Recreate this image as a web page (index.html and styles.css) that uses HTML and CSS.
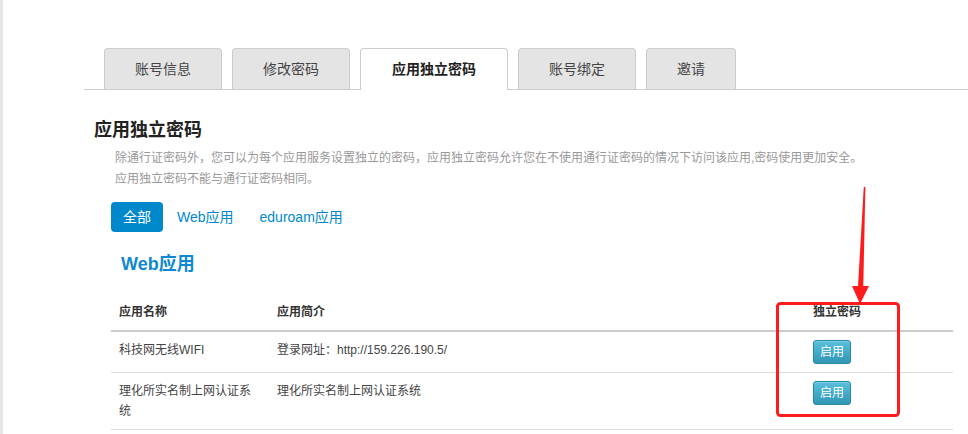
FILE: index.html
```html
<!DOCTYPE html>
<html lang="zh-CN">
<head>
<meta charset="utf-8">
<title>应用独立密码</title>
<link rel="stylesheet" href="styles.css">
</head>
<body>
<div class="page">
  <div class="content">
    <ul class="tabs">
      <li class="tab">账号信息</li>
      <li class="tab">修改密码</li>
      <li class="tab active">应用独立密码</li>
      <li class="tab">账号绑定</li>
      <li class="tab">邀请</li>
    </ul>
    <div class="section">
      <h2 class="title">应用独立密码</h2>
      <p class="desc">除通行证密码外，您可以为每个应用服务设置独立的密码，应用独立密码允许您在不使用通行证密码的情况下访问该应用,密码使用更加安全。<br>应用独立密码不能与通行证密码相同。</p>
      <ul class="pills">
        <li class="pill on">全部</li>
        <li class="pill">Web应用</li>
        <li class="pill">eduroam应用</li>
      </ul>
      <h3 class="group">Web应用</h3>
      <table class="apps">
        <colgroup>
          <col class="c1"><col class="c2"><col class="c3">
        </colgroup>
        <thead>
          <tr><th>应用名称</th><th>应用简介</th><th>独立密码</th></tr>
        </thead>
        <tbody>
          <tr>
            <td>科技网无线WIFI</td>
            <td>登录网址：http://159.226.190.5/</td>
            <td><button class="btn">启用</button></td>
          </tr>
          <tr>
            <td>理化所实名制上网认证系统</td>
            <td>理化所实名制上网认证系统</td>
            <td><button class="btn">启用</button></td>
          </tr>
        </tbody>
      </table>
    </div>
  </div>
  <svg class="annot" width="968" height="434" viewBox="0 0 968 434" aria-hidden="true">
    <rect x="777.5" y="303.5" width="121" height="112" rx="3" fill="none" stroke="#fe1b1b" stroke-width="3"/>
    <polygon points="863.8,187 865.4,187 863.2,290 857.8,290" fill="#fe1b1b"/>
    <polygon points="852,286 869,286 860,304" fill="#fe1b1b"/>
  </svg>
</div>
</body>
</html>
```

FILE: styles.css
```css
html, body {
  margin: 0;
  padding: 0;
  background: #fff;
}
body {
  font-family: "Liberation Sans", "Noto Sans CJK SC", sans-serif;
  font-size: 12px;
  color: #333;
}
.page {
  position: relative;
  width: 968px;
  height: 434px;
  overflow: hidden;
  border-left: 3px solid #e6e6e6;
  padding-top: 48px;
  box-sizing: border-box;
}
.content {
  margin-left: 81px;
}
.tabs {
  list-style: none;
  margin: 0;
  padding: 0 0 0 20px;
  display: flex;
  gap: 10px;
  border-bottom: 1px solid #cccccc;
  height: 41px;
  align-items: flex-start;
}
.tab {
  height: 40px;
  line-height: 40px;
  padding: 0 30px;
  font-size: 14px;
  color: #444;
  background: #e4e4e4;
  border: 1px solid #cccccc;
  border-bottom: none;
  border-radius: 4px 4px 0 0;
}
.tab.active {
  background: #fff;
  height: 41px;
  padding: 0 31px;
  font-weight: bold;
  color: #222;
}
.section {
  padding-left: 10px;
}
.title {
  margin: 28px 0 0 0;
  font-size: 18px;
  line-height: 24px;
  font-weight: bold;
  color: #222;
}
.desc {
  margin: 6px 0 0 21px;
  font-size: 12px;
  line-height: 21px;
  color: #999;
}
.pills {
  list-style: none;
  margin: 12px 0 0 17px;
  padding: 0;
  display: flex;
}
.pill {
  height: 30px;
  line-height: 30px;
  padding: 0 12px;
  margin-right: 2px;
  font-size: 14px;
  color: #0088cc;
  border-radius: 4px;
}
.pill.on {
  background: #0088cc;
  color: #fff;
}
.group {
  margin: 20px 0 0 27px;
  font-size: 18px;
  line-height: 24px;
  font-weight: bold;
  color: #0e88d0;
}
.apps {
  margin: 18px 0 0 17px;
  width: 842px;
  border-collapse: collapse;
  table-layout: fixed;
}
.c1 { width: 158px; }
.c2 { width: 536px; }
.c3 { width: 148px; }
.apps th, .apps td {
  padding: 8px;
  line-height: 20px;
  text-align: left;
  vertical-align: top;
  font-size: 12px;
}
.apps th {
  font-weight: bold;
  color: #333;
  border-bottom: 2px solid #cccccc;
}
.apps td {
  color: #444;
  border-bottom: 1px solid #dddddd;
}
.btn {
  display: block;
  width: 38px;
  height: 24px;
  padding: 0;
  margin: 0;
  font-family: "Liberation Sans", "Noto Sans CJK SC", sans-serif;
  font-size: 12px;
  line-height: 22px;
  color: #fff;
  background: linear-gradient(#5bc0de, #2f96b4);
  border: 1px solid #2a8aa6;
  border-radius: 3px;
  box-shadow: inset 0 1px 0 rgba(255,255,255,0.2);
}
.annot {
  position: absolute;
  left: -3px;
  top: 0;
  pointer-events: none;
}
```
